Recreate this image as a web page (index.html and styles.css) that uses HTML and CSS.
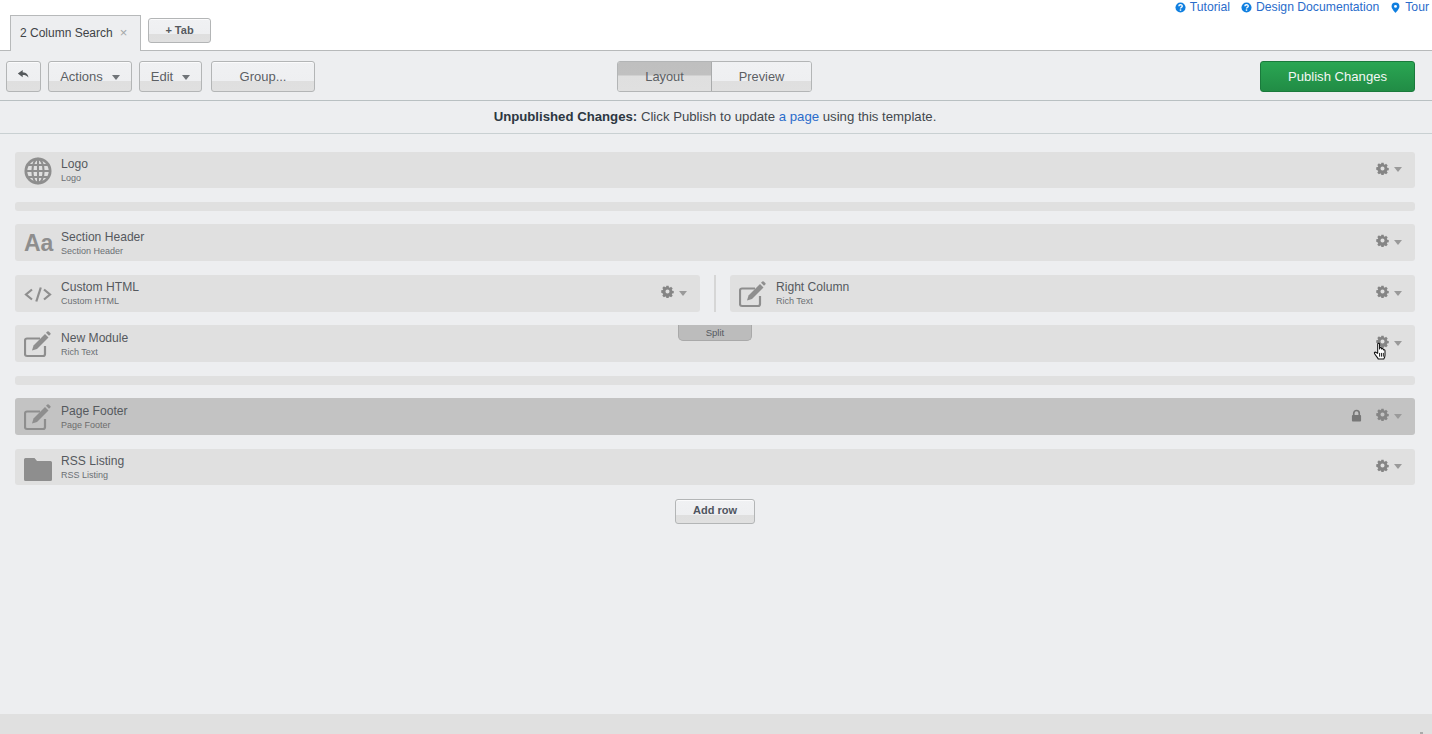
FILE: index.html
```html
<!DOCTYPE html>
<html lang="en">
<head>
<meta charset="utf-8">
<title>2 Column Search</title>
<link rel="stylesheet" href="styles.css">
</head>
<body>
<svg class="defs" width="0" height="0" aria-hidden="true">
  <symbol id="gear" viewBox="0 0 16 16"><path fill-rule="evenodd" d="M6.600 1h2.800l.3 1.900 1.100.5 1.600-1.100 2 2-1.100 1.600.5 1.100 1.900.3v2.800l-1.900.3-.5 1.100 1.100 1.600-2 2-1.600-1.100-1.100.5-.3 1.900H6.600l-.3-1.900-1.100-.5-1.600 1.100-2-2 1.100-1.600-.5-1.100L.3 9.400V6.600l1.900-.3.5-1.100-1.100-1.600 2-2 1.600 1.100 1.100-.5zM8 5.500a2.500 2.500 0 1 0 0 5 2.500 2.500 0 0 0 0-5z"/></symbol>
  <symbol id="edit" viewBox="0 2 28 28"><path fill="none" stroke="currentColor" stroke-width="2.200" d="M16 9.500H3a2 2 0 0 0-2 2V25a2 2 0 0 0 2 2h16a2 2 0 0 0 2-2v-8"/><path d="M8 21.500l1.500-5L21 5l3.500 3.500L13 20z"/><path d="M22 3.800l1.300-1.300a1 1 0 0 1 1.400 0l1.600 1.600a1 1 0 0 1 0 1.400L25 6.800z"/></symbol>
  <symbol id="qmark" viewBox="0 0 12 12"><circle cx="6" cy="6" r="5.500" fill="#0f7fe0"/><path fill="none" stroke="#fff" stroke-width="1.500" d="M4.200 4.700c0-2.300 3.700-2.300 3.700-.2 0 1.300-1.900 1.300-1.900 2.700"/><rect x="5.200" y="8" width="1.600" height="1.600" fill="#fff"/></symbol>
</svg>

<header class="topbar">
  <div class="tab"><span>2 Column Search</span><span class="tab-close">×</span></div>
  <button class="btn btn-tab">+ Tab</button>
  <nav class="help">
    <a class="help-link"><svg class="help-icon"><use href="#qmark"/></svg>Tutorial</a>
    <a class="help-link"><svg class="help-icon"><use href="#qmark"/></svg>Design Documentation</a>
    <a class="help-link"><svg class="help-icon" viewBox="0 0 12 12"><path fill="#0f7fe0" fill-rule="evenodd" d="M6 .5a4.300 4.300 0 0 1 4.300 4.300C10.300 7.500 6 11.800 6 11.800S1.700 7.500 1.700 4.800A4.300 4.300 0 0 1 6 .5zm0 2.700a1.600 1.600 0 1 0 0 3.200 1.600 1.600 0 0 0 0-3.200z"/></svg>Tour</a>
  </nav>
</header>

<div class="toolbar">
  <button class="btn btn-back" aria-label="Back"><svg class="back-arrow" viewBox="0 0 16 12"><path fill="#55595c" d="M7 1L1 5.500 7 10V7.300c3 0 5 .7 7 3 0-3.500-2.500-6.300-7-6.500z"/></svg></button>
  <button class="btn btn-actions">Actions<i class="caret"></i></button>
  <button class="btn btn-edit">Edit<i class="caret"></i></button>
  <button class="btn btn-group">Group...</button>
  <div class="switch">
    <button class="switch-item switch-on">Layout</button>
    <button class="switch-item switch-off">Preview</button>
  </div>
  <button class="btn-publish">Publish Changes</button>
</div>

<div class="notice"><b>Unpublished Changes:</b> Click Publish to update <a>a page</a> using this template.</div>

<main class="rows">
  <div class="row row-first">
    <svg class="ico" viewBox="0 0 30 30"><g fill="none" stroke="currentColor"><circle cx="15" cy="15" r="13" stroke-width="3"/><ellipse cx="15" cy="15" rx="6" ry="13" stroke-width="2.200"/><path stroke-width="2.200" d="M15 2.500v25M2.500 15h25M4.500 8.500h21M4.500 21.500h21"/></g></svg>
    <div class="label"><div class="title">Logo</div><div class="sub">Logo</div></div>
    <div class="cog"><svg class="gear"><use href="#gear"/></svg><i class="caret caret-row"></i></div>
  </div>
  <div class="spacer"></div>
  <div class="row tight">
    <span class="ico ico-text">Aa</span>
    <div class="label"><div class="title">Section Header</div><div class="sub">Section Header</div></div>
    <div class="cog"><svg class="gear"><use href="#gear"/></svg><i class="caret caret-row"></i></div>
  </div>
  <div class="split-row">
    <div class="row row-half">
      <svg class="ico" viewBox="0 1 28 28"><g fill="none" stroke="currentColor" stroke-width="2.200"><path d="M8 9.500l-6 5 6 5M20 9.500l6 5-6 5"/><path d="M16.800 7.500l-4.500 14"/></g></svg>
      <div class="label"><div class="title">Custom HTML</div><div class="sub">Custom HTML</div></div>
      <div class="cog"><svg class="gear"><use href="#gear"/></svg><i class="caret caret-row"></i></div>
    </div>
    <div class="divider"></div>
    <div class="row row-half">
      <svg class="ico"><use href="#edit"/></svg>
      <div class="label"><div class="title">Right Column</div><div class="sub">Rich Text</div></div>
      <div class="cog"><svg class="gear"><use href="#gear"/></svg><i class="caret caret-row"></i></div>
    </div>
  </div>
  <div class="row tight row-module">
    <svg class="ico"><use href="#edit"/></svg>
    <div class="label"><div class="title">New Module</div><div class="sub">Rich Text</div></div>
    <div class="split-tab">Split</div>
    <div class="cog"><svg class="gear"><use href="#gear"/></svg><i class="caret caret-row"></i></div>
    <svg class="hand" viewBox="0 0 16 20"><path fill="#fff" stroke="#111" stroke-width="1.100" stroke-linejoin="round" d="M5 2.200c0-1.300 2-1.300 2 0v5l.2-.9c.5-.9 1.800-.6 1.900.4l.1.700c.4-.8 1.700-.6 1.800.4l.1.600c.5-.6 1.700-.3 1.700.8v4.800c0 1.800-.6 2.800-1.300 4H5.600c-.6-1.500-3.300-4.300-4-5.800-.6-1.200.8-2 1.700-1.100L5 12z"/><path stroke="#111" stroke-width="1" d="M7 11.500v4M9 11.500v4M11 11.500v4"/></svg>
  </div>
  <div class="spacer"></div>
  <div class="row tight row-locked">
    <svg class="ico"><use href="#edit"/></svg>
    <div class="label"><div class="title">Page Footer</div><div class="sub">Page Footer</div></div>
    <svg class="lock" viewBox="0 0 12 14"><path fill="none" stroke="currentColor" stroke-width="1.800" d="M3 7V4.500a3 3 0 0 1 6 0V7"/><rect x="1" y="6.500" width="10" height="7" rx="1"/></svg>
    <div class="cog cog-locked"><svg class="gear"><use href="#gear"/></svg><i class="caret caret-row"></i></div>
  </div>
  <div class="row row-last">
    <svg class="ico" viewBox="0 0 28 28"><path d="M0 5.500A1.500 1.500 0 0 1 1.500 4h9l2.500 3h13.500A1.500 1.500 0 0 1 28 8.500v17a1.500 1.500 0 0 1-1.500 1.500h-25A1.500 1.500 0 0 1 0 25.500z"/></svg>
    <div class="label"><div class="title">RSS Listing</div><div class="sub">RSS Listing</div></div>
    <div class="cog"><svg class="gear"><use href="#gear"/></svg><i class="caret caret-row"></i></div>
  </div>
  <button class="btn btn-add">Add row</button>
</main>

<footer class="pagefoot"><span class="grip"></span></footer>
</body>
</html>
```
FILE: styles.css
```css
* { box-sizing: border-box; }
html, body { height: 100%; }
body {
  margin: 0;
  height: 734px;
  overflow: hidden;
  display: flex;
  flex-direction: column;
  background: #edeef0;
  color: #4f5459;
  font-family: "Liberation Sans", Arial, sans-serif;
}
.defs { position: absolute; }
button { font-family: inherit; cursor: default; padding: 0; }

.topbar {
  display: flex;
  align-items: flex-start;
  flex: none;
  height: 51px;
  padding-left: 10px;
  background: #fff;
  border-bottom: 1px solid #b7b9ba;
}
.tab {
  display: flex;
  align-items: center;
  width: 131px;
  height: 36px;
  margin-top: 15px;
  padding: 0 0 2px 9px;
  background: #edeef0;
  border: 1px solid #b7b9ba;
  border-bottom: 0;
  font-size: 12px;
  color: #3f4347;
  white-space: nowrap;
}
.tab-close { margin-left: 7px; font-size: 13px; color: #a4a6a8; }
.btn {
  display: flex;
  align-items: center;
  justify-content: center;
  border: 1px solid #b3b5b6;
  border-radius: 3px;
  background: linear-gradient(#f0f1f3 0, #eeeff1 64%, #dfdfdf 65%, #e0e0e0 100%);
  box-shadow: inset 0 1px 0 #fbfbfc;
  color: #5c6064;
  font-size: 13px;
}
.btn-tab {
  width: 63px;
  height: 25px;
  margin: 18px 0 0 7px;
  padding-bottom: 2px;
  font-size: 11px;
  font-weight: bold;
  color: #55595e;
}
.help {
  display: flex;
  margin-left: auto;
  padding-right: 3px;
  gap: 11px;
  height: 14px;
}
.help-link {
  display: flex;
  align-items: center;
  gap: 4px;
  color: #2a6ccb;
  font-size: 12.200px;
  line-height: 11px;
  white-space: nowrap;
}
.help-icon { width: 11px; height: 11px; }

.toolbar {
  display: flex;
  flex: none;
  height: 50px;
  padding: 10px 17px 8px 6px;
  border-bottom: 1px solid #b9c0c2;
}
.btn-back { width: 35px; padding-bottom: 6px; }
.back-arrow { width: 13px; height: 10px; }
.btn-actions { width: 84px; margin-left: 7px; }
.btn-edit { width: 63px; margin-left: 7px; }
.btn-group { width: 104px; margin-left: 9px; }
.caret {
  width: 0;
  height: 0;
  margin-left: 9px;
  margin-top: 2px;
  border-left: 4.500px solid transparent;
  border-right: 4.500px solid transparent;
  border-top: 5px solid #707478;
}
.switch {
  display: flex;
  margin-left: 302px;
  width: 195px;
  border: 1px solid #b3b5b6;
  border-radius: 3px;
  overflow: hidden;
}
.switch-item {
  border: 0;
  color: #5c6064;
  font-size: 12.800px;
}
.switch-on {
  width: 94px;
  border-right: 1px solid #a9abac;
  background: linear-gradient(#bfbfbf 0, #c0c0c0 45%, #dfdfdf 48%, #e0e0e0 100%);
}
.switch-off {
  flex: 1;
  background: linear-gradient(#f0f1f3 0, #eeeff1 64%, #dfdfdf 65%, #e0e0e0 100%);
}
.btn-publish {
  margin-left: auto;
  width: 155px;
  border: 1px solid #1a7a3c;
  border-radius: 3px;
  background: linear-gradient(#2aa653, #218c45);
  color: #f3f7f4;
  font-size: 13.100px;
}

.notice {
  flex: none;
  height: 33px;
  line-height: 31px;
  text-align: center;
  font-size: 13.200px;
  color: #43484d;
  border-bottom: 1px solid #c9d0d2;
  padding-right: 2px;
}
.notice b { color: #2c3742; }
.notice a { color: #2a6ccb; }

.rows {
  flex: 1;
  display: flex;
  flex-direction: column;
  padding: 18px 17px 0 15px;
}
.row {
  position: relative;
  display: flex;
  align-items: center;
  flex: none;
  height: 37px;
  margin-top: 14px;
  padding: 0 13px 0 9px;
  background: #e0e0e0;
  border-radius: 3px;
}
.row-first { height: 36px; margin-top: 0; }
.row-last { height: 36px; }
.tight { margin-top: 13px; }
.tight .label { padding-top: 2px; }
.spacer {
  flex: none;
  height: 9px;
  margin-top: 14px;
  background: #e0e0e0;
  border-radius: 3px;
}
.split-row { display: flex; flex: none; margin-top: 14px; }
.row-half { flex: none; width: 685px; margin-top: 0; }
.divider {
  width: 2px;
  margin: 0 14px;
  background: #d6d6d6;
}
.row-locked { background: #c3c3c3; }
.ico {
  flex: none;
  width: 28px;
  height: 28px;
  margin-top: 2px;
  color: #8e8e8e;
  fill: #8e8e8e;
}
.ico-text {
  height: auto;
  font-size: 23px;
  line-height: 28px;
  font-weight: bold;
  white-space: nowrap;
  margin-top: 0;
}
.label { margin-left: 9px; }
.title { font-size: 12.100px; line-height: 14px; color: #55595e; }
.sub { font-size: 9px; line-height: 11px; margin-top: 2px; color: #6b6f73; }
.row-locked .sub { color: #6d6d6d; }
.cog { display: flex; align-items: center; margin-left: auto; padding-bottom: 4px; }
.cog-locked { margin-left: 14px; }
.gear { width: 13px; height: 13px; fill: #858585; }
.caret-row {
  margin-left: 5px;
  margin-top: 3px;
  border-top-color: #9a9a9a;
}
.lock { margin-left: auto; margin-bottom: 3px; width: 11px; height: 13px; color: #777; fill: #777; }
.split-tab {
  position: absolute;
  top: 0;
  left: 663px;
  width: 74px;
  height: 16px;
  background: #bcbcbc;
  border: 1px solid #a9a9a9;
  border-top: 0;
  border-radius: 0 0 5px 5px;
  text-align: center;
  font-size: 9.500px;
  line-height: 15px;
  color: #55595e;
}
.hand {
  position: absolute;
  top: 17px;
  left: 1358px;
  width: 15px;
  height: 19px;
}
.btn-add {
  flex: none;
  align-self: center;
  width: 80px;
  height: 25px;
  margin-top: 14px;
  padding-bottom: 3px;
  font-size: 11px;
  font-weight: bold;
  color: #4f5560;
}

.pagefoot {
  position: relative;
  flex: none;
  height: 20px;
  background: #e0e0e0;
}
.grip {
  position: absolute;
  right: 9px;
  bottom: 0;
  width: 3px;
  height: 2px;
  background: #aaa;
}
```
